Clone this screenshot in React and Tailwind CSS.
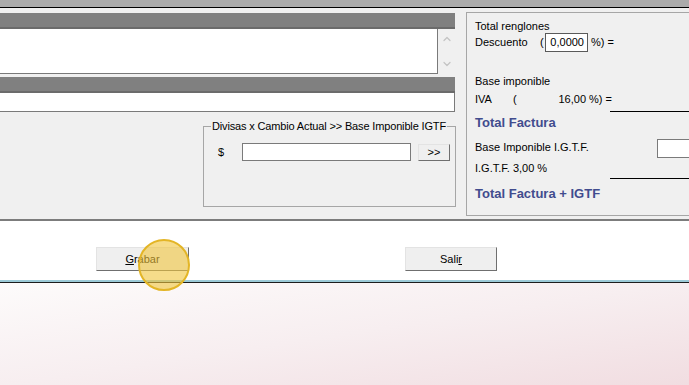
import { ChevronUp, ChevronDown } from 'lucide-react';

const font = { fontFamily: '"Liberation Sans", Arial, sans-serif' };

function WinButton({ children, className = '' }) {
  return (
    <button
      className={`flex items-center justify-center bg-[#efefef] border border-t-[#e3e3e3] border-l-[#e3e3e3] border-r-[#6f6f6f] border-b-[#6f6f6f] text-[11px] text-black ${className}`}
    >
      {children}
    </button>
  );
}

function TotalsPanel() {
  return (
    <div className="w-[240px] h-[204px] border border-[#a6a6a6] border-r-0 bg-[#f0f0f0] pl-[8px] text-[11px] text-black shrink-0">
      <div className="mt-[6px] h-[14px] leading-[14px]">Total renglones</div>
      <div className="h-[19px] flex items-center">
        <span className="w-[65px]">Descuento</span>
        <span className="w-[5px]">(</span>
        <div className="w-[43px] h-[19px] border border-[#5a5a5a] bg-white flex items-center justify-end pr-[3px]">0,0000</div>
        <span className="ml-[3px]">%) =</span>
      </div>
      <div className="mt-[22px] h-[14px] leading-[14px]">Base imponible</div>
      <div className="mt-[4px] h-[14px] flex items-center">
        <span className="w-[38px]">IVA</span>
        <span className="w-[6px]">(</span>
        <span className="w-[67px] text-right">16,00</span>
        <span className="ml-[3px]">%) =</span>
      </div>
      <div className="mt-[5px] ml-[135px] h-px bg-black" />
      <div className="mt-[2px] h-[18px] leading-[18px] text-[13px] font-bold text-[#414c8e]">Total Factura</div>
      <div className="mt-[7px] h-[19px] flex items-start">
        <span className="w-[182px] pt-px leading-[14px]">Base Imponible I.G.T.F.</span>
        <div className="w-[33px] h-[19px] border border-[#7a7a7a] border-r-0 bg-white" />
      </div>
      <div className="mt-[3px] h-[14px] leading-[14px]">I.G.T.F. 3,00 %</div>
      <div className="mt-[3px] ml-[135px] h-px bg-black" />
      <div className="mt-[6px] h-[18px] leading-[18px] text-[13px] font-bold text-[#414c8e]">Total Factura + IGTF</div>
    </div>
  );
}

function LeftColumn() {
  return (
    <div className="w-[456px] shrink-0 mt-px">
      <div className="w-[455px] h-[16px] bg-[#808080] border-b-2 border-[#6b6b6b]" />
      <div className="flex h-[45px]">
        <div className="w-[438px] h-[45px] bg-white border-r border-b border-[#7a7a7a]" />
        <div className="w-[17px] flex flex-col items-center justify-between py-[4px] text-[#c4c4c4]">
          <ChevronUp size={12} strokeWidth={2.5} />
          <ChevronDown size={12} strokeWidth={2.5} />
        </div>
      </div>
      <div className="mt-[3px] w-[455px] h-[16px] bg-[#808080] border-b-2 border-[#6b6b6b]" />
      <div className="w-[455px] h-[19px] bg-white border-r border-b border-[#7a7a7a]" />
      <fieldset className="ml-[203px] mt-[7px] w-[253px] h-[88px] border border-[#a6a6a6] pl-[6px] pr-[4px] min-w-0">
        <legend className="ml-[1px] px-[1px] text-[11px] leading-[14px] text-black whitespace-nowrap tracking-[-0.15px]">
          Divisas x Cambio Actual &gt;&gt; Base Imponible IGTF
        </legend>
        <div className="mt-[10px] flex items-center text-[11px]">
          <span className="ml-[8px] w-[24px] shrink-0">$</span>
          <div className="w-[169px] h-[18px] bg-white border border-[#7a7a7a] shrink-0" />
          <WinButton className="ml-[7px] w-[32px] h-[17px] shrink-0">&gt;&gt;</WinButton>
        </div>
      </fieldset>
    </div>
  );
}

export default function App() {
  return (
    <div className="relative w-[689px] h-[385px] overflow-hidden" style={font}>
      <div className="h-[8px] bg-[#ababab] border-b border-black" />
      <div className="h-[213px] bg-[#f0f0f0] border-b-2 border-[#7c7c7c] pt-[4px] flex gap-[10px]">
        <LeftColumn />
        <TotalsPanel />
      </div>
      <div className="h-[59px] bg-white flex items-end pb-[9px]">
        <WinButton className="ml-[96px] w-[93px] h-[24px]">
          <span className="underline">G</span>rabar
        </WinButton>
        <WinButton className="ml-[216px] w-[92px] h-[24px]">
          Sali<span className="underline">r</span>
        </WinButton>
      </div>
      <div className="h-[2px] bg-[#9ccad7]" />
      <div className="h-px bg-[#1d1d1d]" />
      <div className="h-[103px] bg-gradient-to-br from-[#fdfbfb] via-[#f7eef0] to-[#f1dde1]" />
      <div className="absolute left-[138px] top-[239px] w-[52px] h-[52px] rounded-full border-2 border-[#e3b526] bg-[#f0c43c]/60" />
    </div>
  );
}
